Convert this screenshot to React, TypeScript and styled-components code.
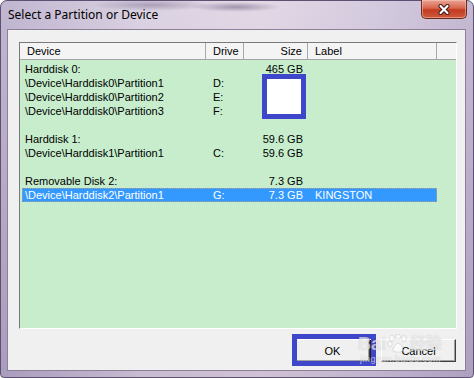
import React from "react";
import styled, { createGlobalStyle } from "styled-components";

const Global = createGlobalStyle`
  html, body { margin: 0; padding: 0; background: #ffffff; }
  body { width: 474px; height: 378px; overflow: hidden; }
`;

const UI_FONT = `"Liberation Sans", Arial, sans-serif`;

const Window = styled.div`
  position: relative;
  box-sizing: border-box;
  width: 474px;
  height: 378px;
  display: flex;
  flex-direction: column;
  padding: 0 7px 6px 6px;
  border: 1px solid #5e5070;
  border-radius: 7px 7px 4px 4px;
  background:
    radial-gradient(ellipse 60px 6px at 150px 4px, rgba(110, 96, 130, 0.45), transparent),
    radial-gradient(ellipse 45px 5px at 235px 6px, rgba(95, 84, 118, 0.5), transparent),
    linear-gradient(to bottom, rgba(255, 255, 255, 0.18), rgba(60, 40, 80, 0.08)),
    linear-gradient(to right, #b3a6c6 0%, #d3c8dc 30%, #dccfdf 55%, #cbbfd8 80%, #b7a9c8 100%);
`;

const TitleBar = styled.div`
  height: 28px;
  display: flex;
  align-items: flex-start;
  padding-left: 1px;
`;

const Title = styled.span`
  font-family: "Noto Sans", "Open Sans", sans-serif;
  font-size: 12px;
  line-height: 16px;
  padding-top: 6px;
  color: #000000;
`;

const CloseButton = styled.div`
  margin-left: auto;
  margin-top: -1px;
  margin-right: -1px;
  width: 46px;
  height: 19px;
  box-sizing: border-box;
  display: flex;
  align-items: center;
  justify-content: center;
  border: 1px solid #6b2b1f;
  border-top: none;
  border-radius: 0 0 5px 5px;
  background: linear-gradient(to bottom, #e9a595 0%, #d8654c 45%, #c23b22 55%, #cf5b3d 100%);
  box-shadow: inset 0 0 0 1px rgba(255, 210, 200, 0.45);
`;

const Client = styled.div`
  flex: 1;
  display: flex;
  flex-direction: column;
  background: #f0f0f0;
  border: 1px solid #8b8097;
  padding: 12px 8px 8px 11px;
`;

const ListBox = styled.div`
  box-sizing: border-box;
  width: 438px;
  height: 287px;
  display: flex;
  flex-direction: column;
  background: #c7edcc;
  border-style: solid;
  border-width: 1px;
  border-color: #7a7a7a #ffffff #ffffff #7a7a7a;
  font-family: ${UI_FONT};
  font-size: 11px;
  color: #000000;
`;

const COLS = "186px 38px 64px 129px 1fr";

const Header = styled.div`
  display: grid;
  grid-template-columns: ${COLS};
  height: 17px;
  background: #f4f4f4;
  border-bottom: 1px solid #a5a5a5;
  box-sizing: border-box;
`;

const HeaderCell = styled.div<{ $right?: boolean; $pl?: number }>`
  box-sizing: border-box;
  border-right: 1px solid #a9a9a9;
  padding: 0 5px 0 ${(p) => p.$pl ?? 7}px;
  line-height: 16px;
  text-align: ${(p) => (p.$right ? "right" : "left")};
  white-space: nowrap;
  &:last-child { border-right: none; }
`;

const Body = styled.div`
  display: flex;
  flex-direction: column;
  padding-top: 2px;
`;

const Row = styled.div<{ $selected?: boolean }>`
  display: grid;
  grid-template-columns: 184px 38px 64px 129px;
  width: 415px;
  margin-left: 2px;
  height: 14px;
  box-sizing: border-box;
  line-height: 13px;
  background: ${(p) => (p.$selected ? "#3399ff" : "transparent")};
  color: ${(p) => (p.$selected ? "#ffffff" : "#000000")};
  outline: ${(p) => (p.$selected ? "1px dotted rgba(214, 160, 110, 0.75)" : "none")};
  outline-offset: -1px;
`;

const Cell = styled.div<{ $right?: boolean; $pl?: number }>`
  box-sizing: border-box;
  padding: 0 5px 0 ${(p) => p.$pl ?? 7}px;
  padding-top: 1px;
  text-align: ${(p) => (p.$right ? "right" : "left")};
  white-space: nowrap;
`;

const ButtonRow = styled.div`
  display: flex;
  justify-content: flex-end;
  gap: 11px;
  margin-top: 10px;
  padding-right: 1px;
`;

const Button = styled.div<{ $default?: boolean }>`
  box-sizing: border-box;
  width: 75px;
  height: 23px;
  display: flex;
  align-items: center;
  justify-content: center;
  font-family: ${UI_FONT};
  font-size: 11px;
  color: #000000;
  background: #f0f0f0;
  border-style: solid;
  border-width: 1px;
  border-color: #ffffff #404040 #404040 #ffffff;
  box-shadow: ${(p) =>
    p.$default ? "inset -1px -1px 0 #a0a0a0, 1px 1px 0 #202020" : "inset -1px -1px 0 #a0a0a0"};
`;

const Marker = styled.div<{ $fill?: boolean }>`
  position: absolute;
  box-sizing: border-box;
  border: 5px solid #3e46c9;
  background: ${(p) => (p.$fill ? "#ffffff" : "transparent")};
`;

const Watermark = styled.div`
  position: absolute;
  left: 357px;
  top: 333px;
  display: flex;
  flex-direction: column;
  align-items: flex-start;
  pointer-events: none;
  color: rgba(255, 255, 255, 0.6);
  text-shadow: 0 0 1px rgba(90, 90, 90, 0.3);
  font-family: "Liberation Sans", Arial, "Noto Sans CJK SC", sans-serif;
`;

const WatermarkTop = styled.div`
  display: flex;
  align-items: center;
  gap: 1px;
  font-size: 18px;
  font-weight: bold;
  line-height: 18px;
`;

const WatermarkSub = styled.div`
  font-size: 9px;
  line-height: 10px;
  margin-left: 2px;
  letter-spacing: 0.5px;
`;

type Rec = { dev: string; drive?: string; size?: string; label?: string; selected?: boolean };

const rows: Rec[] = [
  { dev: "Harddisk 0:", size: "465 GB" },
  { dev: "\\Device\\Harddisk0\\Partition1", drive: "D:" },
  { dev: "\\Device\\Harddisk0\\Partition2", drive: "E:" },
  { dev: "\\Device\\Harddisk0\\Partition3", drive: "F:" },
  { dev: "" },
  { dev: "Harddisk 1:", size: "59.6 GB" },
  { dev: "\\Device\\Harddisk1\\Partition1", drive: "C:", size: "59.6 GB" },
  { dev: "" },
  { dev: "Removable Disk 2:", size: "7.3 GB" },
  { dev: "\\Device\\Harddisk2\\Partition1", drive: "G:", size: "7.3 GB", label: "KINGSTON", selected: true },
];

export default function App() {
  return (
    <>
      <Global />
      <Window>
        <TitleBar>
          <Title>Select a Partition or Device</Title>
          <CloseButton>
            <svg width="12" height="11" viewBox="0 0 12 11">
              <path d="M2.5 2 L9.5 9 M9.5 2 L2.5 9" stroke="#3a1610" strokeWidth="4" strokeLinecap="round" />
              <path d="M2.5 2 L9.5 9 M9.5 2 L2.5 9" stroke="#ffffff" strokeWidth="2.2" strokeLinecap="round" />
            </svg>
          </CloseButton>
        </TitleBar>
        <Client>
          <ListBox>
            <Header>
              <HeaderCell>Device</HeaderCell>
              <HeaderCell>Drive</HeaderCell>
              <HeaderCell $right>Size</HeaderCell>
              <HeaderCell>Label</HeaderCell>
              <HeaderCell />
            </Header>
            <Body>
              {rows.map((r, i) => (
                <Row key={i} $selected={r.selected}>
                  <Cell $pl={3}>{r.dev}</Cell>
                  <Cell>{r.drive}</Cell>
                  <Cell $right>{r.size}</Cell>
                  <Cell>{r.label}</Cell>
                </Row>
              ))}
            </Body>
          </ListBox>
          <ButtonRow>
            <Button $default>OK</Button>
            <Button>Cancel</Button>
          </ButtonRow>
        </Client>
        <Marker $fill style={{ left: 261, top: 73, width: 44, height: 45 }} />
        <Marker style={{ left: 291, top: 333, width: 84, height: 32 }} />
        <Watermark>
          <WatermarkTop>
            <span>Bai</span>
            <svg width="22" height="20" viewBox="0 0 22 20">
              <g fill="rgba(255,255,255,0.6)" stroke="rgba(110,110,110,0.3)" strokeWidth="0.6">
                <ellipse cx="5" cy="4" rx="2.4" ry="3" />
                <ellipse cx="11" cy="2.8" rx="2.4" ry="2.8" />
                <ellipse cx="17" cy="4.5" rx="2.4" ry="3" />
                <ellipse cx="3" cy="10" rx="2.2" ry="2.6" />
                <path d="M6 17 C6 12 9 9.5 11 9.5 C13 9.5 16 12 16 17 C13 18.5 9 18.5 6 17 Z" />
              </g>
            </svg>
            <span style={{ fontSize: 16 }}>经验</span>
          </WatermarkTop>
          <WatermarkSub>jingyan.baidu.com</WatermarkSub>
        </Watermark>
      </Window>
    </>
  );
}
